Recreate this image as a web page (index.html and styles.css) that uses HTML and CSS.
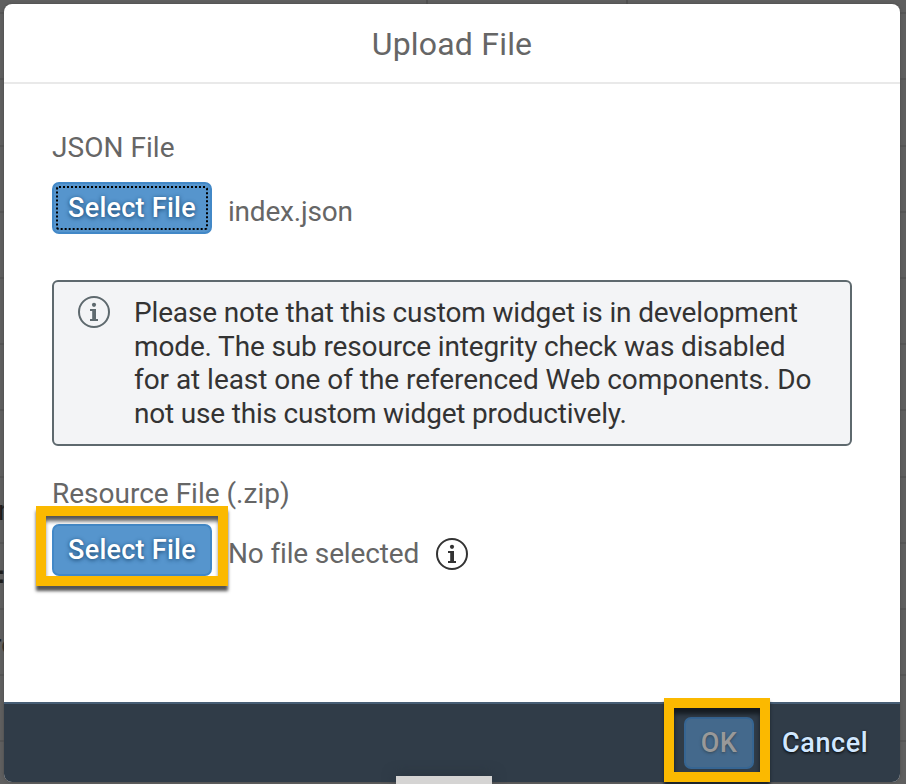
FILE: index.html
```html
<!DOCTYPE html>
<html lang="en">
<head>
<meta charset="utf-8">
<title>Upload File</title>
<link rel="stylesheet" href="styles.css">
</head>
<body>
<div class="backdrop">
  <span class="behind behind-a">r</span>
  <span class="behind behind-b">=</span>
  <span class="behind behind-c">re</span>
  <section class="dialog">
    <header class="header"><h1 class="title">Upload File</h1></header>
    <main class="content">
      <div class="label label-json"><span>JSON File</span></div>
      <div class="row">
        <button class="btn focused"><span>Select File</span></button>
        <span class="filename name-json">index.json</span>
      </div>
      <div class="message">
        <svg class="info" viewBox="0 0 32 32"><circle cx="16" cy="16" r="15"/><circle class="solid" cx="16" cy="8.8" r="2.1"/><path class="solid" d="M12 13h6v10h2v2h-8v-2h2.2v-8H12z"/></svg>
        <p class="note">
          <span class="l1">Please note that this custom widget is in development</span>
          <span class="l2">mode. The sub resource integrity check was disabled</span>
          <span class="l3">for at least one of the referenced Web components. Do</span>
          <span class="l4">not use this custom widget productively.</span>
        </p>
      </div>
      <div class="label label-resource"><span>Resource File (.zip)</span></div>
      <div class="row">
        <div class="marked"><button class="btn"><span>Select File</span></button><i class="highlight"></i></div>
        <span class="filename name-none">No file selected</span>
        <svg class="info dark" viewBox="0 0 32 32"><circle cx="16" cy="16" r="15"/><circle class="solid" cx="16" cy="8.8" r="2.1"/><path class="solid" d="M12 13h6v10h2v2h-8v-2h2.2v-8H12z"/></svg>
      </div>
    </main>
    <footer class="footer">
      <div class="marked"><button class="btn ok"><span>OK</span></button><i class="highlight highlight-ok"></i></div>
      <button class="cancel">Cancel</button>
    </footer>
  </section>
  <div class="tab"></div>
</div>
</body>
</html>
```
FILE: styles.css
```css
* { box-sizing: border-box; }
body { margin: 0; font: 28px/34px Roboto, "Noto Sans", sans-serif; color: #666; }
.backdrop {
  position: relative; width: 906px; height: 784px; padding: 4px 6px 2px 4px; overflow: hidden;
  background:
    linear-gradient(#505050, #505050) 426px 0 / 2px 4px no-repeat,
    linear-gradient(#505050, #505050) 626px 0 / 2px 4px no-repeat,
    repeating-linear-gradient(to bottom, transparent 0 64.2px, #555 64.2px 66.2px) 0 -52px / 100% 900px, #5f5f5f;
}
.behind { position: absolute; color: #1d1d1d; line-height: 32px; }
.behind-a { left: -2px; top: 495px; }
.behind-b { left: -18px; top: 561px; font-size: 44px; }
.behind-c { left: -8px; top: 629px; }
.dialog {
  position: relative; display: flex; flex-direction: column; height: 778px;
  border-radius: 8px; background: #fff; box-shadow: 0 0 3px #484848;
}
.header { height: 80px; flex: none; border-bottom: 2px solid #e9e9e9; display: flex; align-items: center; justify-content: center; }
.title { margin: 0; padding-top: 2px; font-size: 32px; font-weight: 400; line-height: 38px; letter-spacing: .2px; }
.content { flex: 1; padding: 47px 48px 0; }
.label { height: 34px; white-space: nowrap; }
.label-json { margin-bottom: 17px; letter-spacing: .04px; }
.label-resource { margin: 31px 0 13px; letter-spacing: 0; }
.row { display: flex; height: 52px; align-items: center; }
.btn {
  display: block; width: 160px; height: 52px; padding: 0; border: 2px solid #4288c7; border-radius: 7px;
  background: #5695cd; color: #fff; font: 500 27px/44px Roboto, sans-serif; letter-spacing: .25px;
  text-shadow: 0 1px 4px #17446c; white-space: nowrap;
}
.focused { outline: 2px dotted #000; outline-offset: -6px; }
.filename { margin-left: 16px; padding-top: 8px; white-space: nowrap; }
.name-json { letter-spacing: -.2px; }
.name-none { letter-spacing: -.15px; width: 191px; }
.message { display: flex; width: 800px; height: 166px; margin-top: 46px; padding: 14px 24px; border: 2px solid #5e696e; border-radius: 6px; background: #f3f4f6; }
.info { width: 32px; height: 32px; flex: none; fill: none; stroke: #5e696e; stroke-width: 2; }
.info .solid { fill: #5e696e; stroke: none; }
.dark { margin: 8px 0 0 16.5px; stroke: #333; }
.dark .solid { fill: #333; }
.note { margin: 0 0 0 24px; color: #333; line-height: 33.5px; white-space: nowrap; }
.note span { display: block; }
.l1 { letter-spacing: -.15px; }
.l2 { letter-spacing: -.14px; }
.l3 { letter-spacing: -.05px; }
.l4 { letter-spacing: -.19px; }
.marked { position: relative; }
.highlight { position: absolute; left: -16px; top: -18px; width: 192px; height: 80px; border: 10px solid #fbb900; box-shadow: 0 5px 3px #555, inset 0 6px 4px -1px #555; }
.footer { height: 80px; flex: none; display: flex; align-items: center; justify-content: flex-end; padding: 0 32px 0 0; border-top: 2px solid #475e75; border-radius: 0 0 8px 8px; background: #303c48; }
.ok { width: 70px; border-color: #366592; background: #44698c; color: #999; letter-spacing: .3px; text-shadow: 0 1px 3px #344654; }
.highlight-ok { left: -20px; top: -19px; width: 106px; height: 84px; box-shadow: 0 4px 3px #1c242b, inset 0 6px 4px #151b21; }
.cancel { width: 86px; margin-left: 28px; padding: 0; border: 0; background: none; color: #d1e8ff; font: 500 27px/34px Roboto, sans-serif; letter-spacing: .6px; white-space: nowrap; text-shadow: 0 1px 3px #000; }
.tab { position: absolute; left: 396px; top: 776px; width: 96px; height: 8px; background: #d5d4d3; box-shadow: 0 0 14px #28323b; }
```
